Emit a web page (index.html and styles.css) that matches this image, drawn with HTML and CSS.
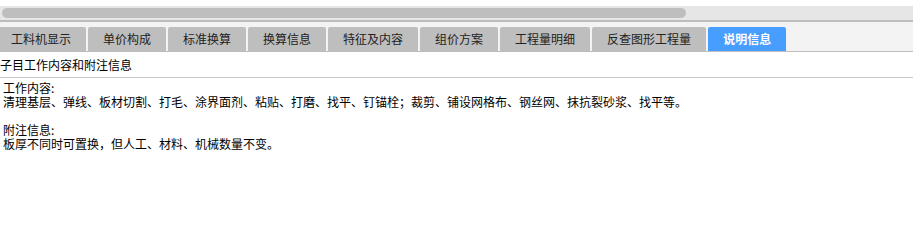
FILE: index.html
```html
<!DOCTYPE html>
<html lang="zh-CN">
<head>
<meta charset="utf-8">
<link rel="stylesheet" href="styles.css">
</head>
<body>
<div class="scroll-track"><div class="scroll-thumb"></div></div>
<div class="tabbar">
  <div class="tab">工料机显示</div>
  <div class="tab">单价构成</div>
  <div class="tab">标准换算</div>
  <div class="tab">换算信息</div>
  <div class="tab">特征及内容</div>
  <div class="tab">组价方案</div>
  <div class="tab">工程量明细</div>
  <div class="tab">反查图形工程量</div>
  <div class="tab active">说明信息</div>
</div>
<div class="title">子目工作内容和附注信息</div>
<div class="content">
  <div class="block">
    <div class="line">工作内容:</div>
    <div class="line">清理基层、弹线、板材切割、打毛、涂界面剂、粘贴、打磨、找平、钉锚栓；裁剪、铺设网格布、钢丝网、抹抗裂砂浆、找平等。</div>
  </div>
  <div class="block">
    <div class="line">附注信息:</div>
    <div class="line">板厚不同时可置换，但人工、材料、机械数量不变。</div>
  </div>
</div>
</body>
</html>
```
FILE: styles.css
```css
html, body {
  margin: 0;
  padding: 0;
  background: #ffffff;
  font-family: "Noto Sans CJK SC", "Noto Sans", sans-serif;
  font-size: 12px;
  color: #000;
  overflow: hidden;
}
body {
  padding-top: 6px;
}
.scroll-track {
  height: 14px;
  background: #e6e6e6;
  display: flex;
  align-items: center;
  padding-left: 2px;
  border-bottom: 2px solid #bdbdbd;
}
.scroll-thumb {
  width: 684px;
  height: 10px;
  border-radius: 5px;
  background: #bebebe;
}
.tabbar {
  background: #f3f3f3;
  height: 24px;
  padding-top: 5px;
  display: flex;
  gap: 2px;
  border-bottom: 1px solid #bdbdbd;
  overflow: hidden;
}
.tab {
  flex: none;
  height: 24px;
  line-height: 24px;
  padding: 0 15px;
  background: #bebebe;
  color: #222;
  font-size: 12px;
  border-radius: 2px 2px 0 0;
  white-space: nowrap;
}
.tab:first-child {
  margin-left: -4px;
}
.tab.active {
  background: #479eff;
  color: #fff;
  font-weight: bold;
}
.title {
  height: 25px;
  line-height: 25px;
  border-bottom: 1px solid #c8c8c8;
  white-space: nowrap;
}
.content {
  padding: 3px 0 0 3px;
  display: flex;
  flex-direction: column;
  gap: 14px;
}
.line {
  line-height: 14px;
  white-space: nowrap;
}
```
